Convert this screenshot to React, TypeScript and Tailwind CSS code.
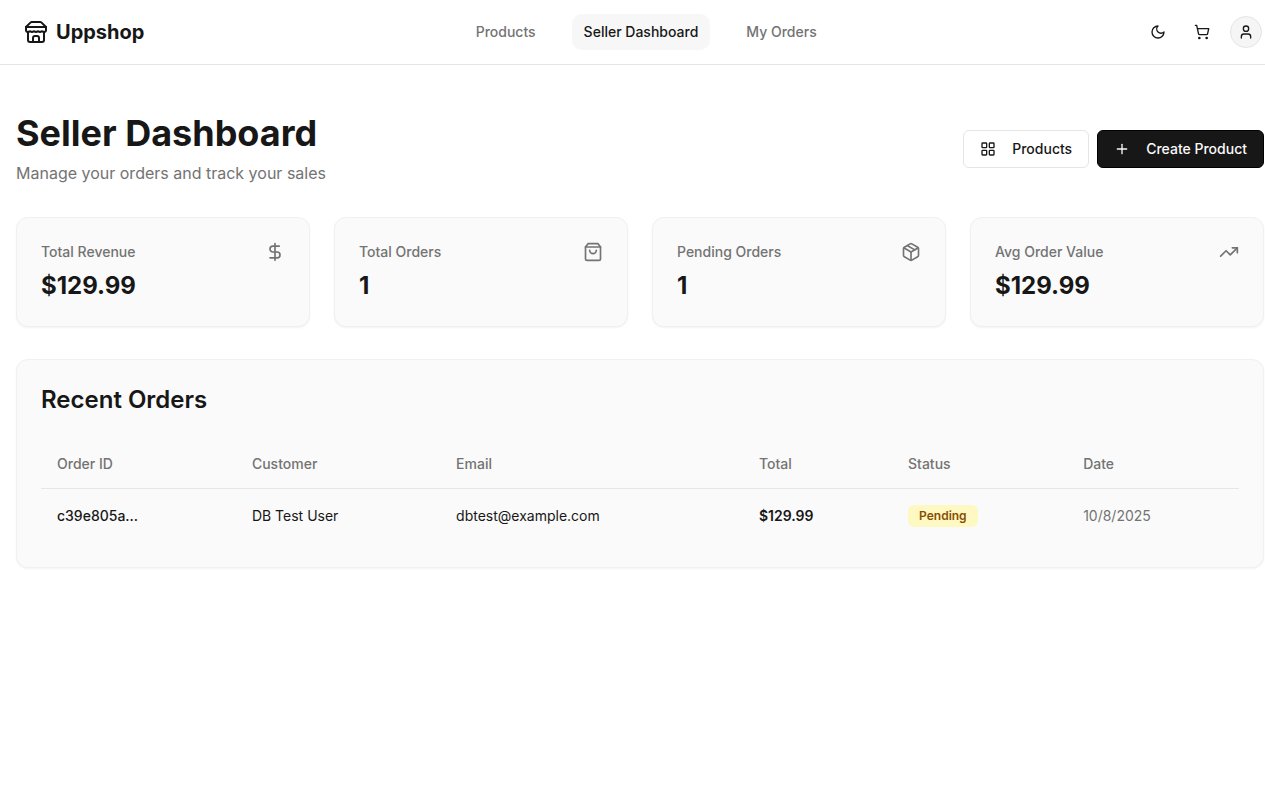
import React from "react";
import { DollarSign, LayoutGrid, Package, Plus, ShoppingCart, TrendingUp, User } from "lucide-react";

type IconProps = { className?: string };

function LineIcon({ className, children }: IconProps & { children: React.ReactNode }) {
  return (
    <svg
      viewBox="0 0 24 24"
      fill="none"
      stroke="currentColor"
      strokeWidth="2"
      strokeLinecap="round"
      strokeLinejoin="round"
      aria-hidden="true"
      className={className}
    >
      {children}
    </svg>
  );
}

function StoreIcon({ className }: IconProps) {
  return (
    <LineIcon className={className}>
      <path d="m2 7 4.41-4.41A2 2 0 0 1 7.83 2h8.34a2 2 0 0 1 1.42.59L22 7" />
      <path d="M4 12v8a2 2 0 0 0 2 2h12a2 2 0 0 0 2-2v-8" />
      <path d="M15 22v-4a2 2 0 0 0-2-2h-2a2 2 0 0 0-2 2v4" />
      <path d="M2 7h20" />
      <path d="M22 7v3a2 2 0 0 1-2 2a2.7 2.7 0 0 1-1.59-.63.7.7 0 0 0-.82 0A2.7 2.7 0 0 1 16 12a2.7 2.7 0 0 1-1.59-.63.7.7 0 0 0-.82 0A2.7 2.7 0 0 1 12 12a2.7 2.7 0 0 1-1.59-.63.7.7 0 0 0-.82 0A2.7 2.7 0 0 1 8 12a2.7 2.7 0 0 1-1.59-.63.7.7 0 0 0-.82 0A2.7 2.7 0 0 1 4 12a2 2 0 0 1-2-2V7" />
    </LineIcon>
  );
}

function MoonIcon({ className }: IconProps) {
  return (
    <LineIcon className={className}>
      <path d="M12 3a6 6 0 0 0 9 9 9 9 0 1 1-9-9Z" />
    </LineIcon>
  );
}

function BagIcon({ className }: IconProps) {
  return (
    <LineIcon className={className}>
      <path d="M6 2 3 6v14a2 2 0 0 0 2 2h14a2 2 0 0 0 2-2V6l-3-4Z" />
      <path d="M3 6h18" />
      <path d="M16 10a4 4 0 0 1-8 0" />
    </LineIcon>
  );
}

const links = [
  { label: "Products", active: false },
  { label: "Seller Dashboard", active: true },
  { label: "My Orders", active: false },
];

const stats = [
  { label: "Total Revenue", value: "$129.99", Icon: DollarSign },
  { label: "Total Orders", value: "1", Icon: BagIcon },
  { label: "Pending Orders", value: "1", Icon: Package },
  { label: "Avg Order Value", value: "$129.99", Icon: TrendingUp },
];

const columns = ["Order ID", "Customer", "Email", "Total", "Status", "Date"];

const orders = [
  {
    id: "c39e805a...",
    customer: "DB Test User",
    email: "dbtest@example.com",
    total: "$129.99",
    status: "Pending",
    date: "10/8/2025",
  },
];

function Header() {
  return (
    <header className="border-b border-neutral-200">
      <div className="flex h-16 items-center justify-between pl-4 pr-px">
        <a href="#" className="flex items-center gap-2 px-2 text-xl font-bold">
          <StoreIcon className="size-6" />
          Uppshop
        </a>
        <nav className="flex items-center gap-6 text-sm font-medium">
          {links.map((link) => (
            <a
              key={link.label}
              href="#"
              className={
                link.active
                  ? "rounded-[10px] bg-[#f7f7f7] px-3 py-2 text-neutral-900"
                  : "rounded-[10px] px-3 py-2 text-neutral-500"
              }
            >
              {link.label}
            </a>
          ))}
        </nav>
        <div className="flex items-center gap-2">
          <button aria-label="Toggle theme" className="flex size-9 items-center justify-center">
            <MoonIcon className="size-4" />
          </button>
          <button aria-label="Cart" className="flex size-9 items-center justify-center">
            <ShoppingCart className="size-4" />
          </button>
          <button aria-label="Account" className="flex size-9 items-center justify-center">
            <span className="flex size-8 items-center justify-center rounded-full border border-neutral-200 bg-neutral-100">
              <User className="size-4" />
            </span>
          </button>
        </div>
      </div>
    </header>
  );
}

function StatCard({ label, value, Icon }: (typeof stats)[number]) {
  return (
    <div className="rounded-xl border border-[#f0f0f0] bg-neutral-50 p-6 shadow-xs">
      <div className="flex items-center justify-between">
        <p className="text-sm font-medium text-neutral-500">{label}</p>
        <Icon className="size-5 text-neutral-500" />
      </div>
      <p className="mt-2 text-2xl font-bold">{value}</p>
    </div>
  );
}

function OrdersTable() {
  return (
    <table className="w-full text-left text-sm">
      <thead>
        <tr className="border-b border-neutral-200">
          {columns.map((column) => (
            <th key={column} className="h-12 px-4 font-medium text-neutral-500">
              {column}
            </th>
          ))}
        </tr>
      </thead>
      <tbody>
        {orders.map((order) => (
          <tr key={order.id}>
            <td className="p-4 font-medium">{order.id}</td>
            <td className="p-4">{order.customer}</td>
            <td className="p-4">{order.email}</td>
            <td className="p-4 font-semibold">{order.total}</td>
            <td className="p-4">
              <span className="inline-flex items-center rounded-md border border-transparent bg-yellow-100 px-2.5 py-0.5 text-xs font-semibold text-yellow-800">
                {order.status}
              </span>
            </td>
            <td className="p-4 text-neutral-500">{order.date}</td>
          </tr>
        ))}
      </tbody>
    </table>
  );
}

export default function App() {
  return (
    <div className="min-h-screen bg-white font-['Inter',sans-serif] text-neutral-900">
      <Header />
      <main className="flex flex-col gap-8 py-12 pl-4 pr-px">
        <div className="flex items-center justify-between">
          <div className="flex flex-col gap-2">
            <h1 className="text-4xl font-bold">Seller Dashboard</h1>
            <p className="text-neutral-500">Manage your orders and track your sales</p>
          </div>
          <div className="flex gap-2 text-sm font-medium">
            <button className="flex items-center gap-4 rounded-md border border-neutral-200 bg-white px-4 py-2">
              <LayoutGrid className="size-4" />
              Products
            </button>
            <button className="flex items-center gap-4 rounded-md border border-black bg-neutral-900 px-4 py-2 text-neutral-50">
              <Plus className="size-4" />
              Create Product
            </button>
          </div>
        </div>
        <section className="grid grid-cols-4 gap-6" aria-label="Statistics">
          {stats.map((stat) => (
            <StatCard key={stat.label} {...stat} />
          ))}
        </section>
        <section className="rounded-xl border border-[#f0f0f0] bg-neutral-50 p-6 shadow-xs">
          <h2 className="mb-6 text-2xl font-semibold">Recent Orders</h2>
          <OrdersTable />
        </section>
      </main>
    </div>
  );
}
